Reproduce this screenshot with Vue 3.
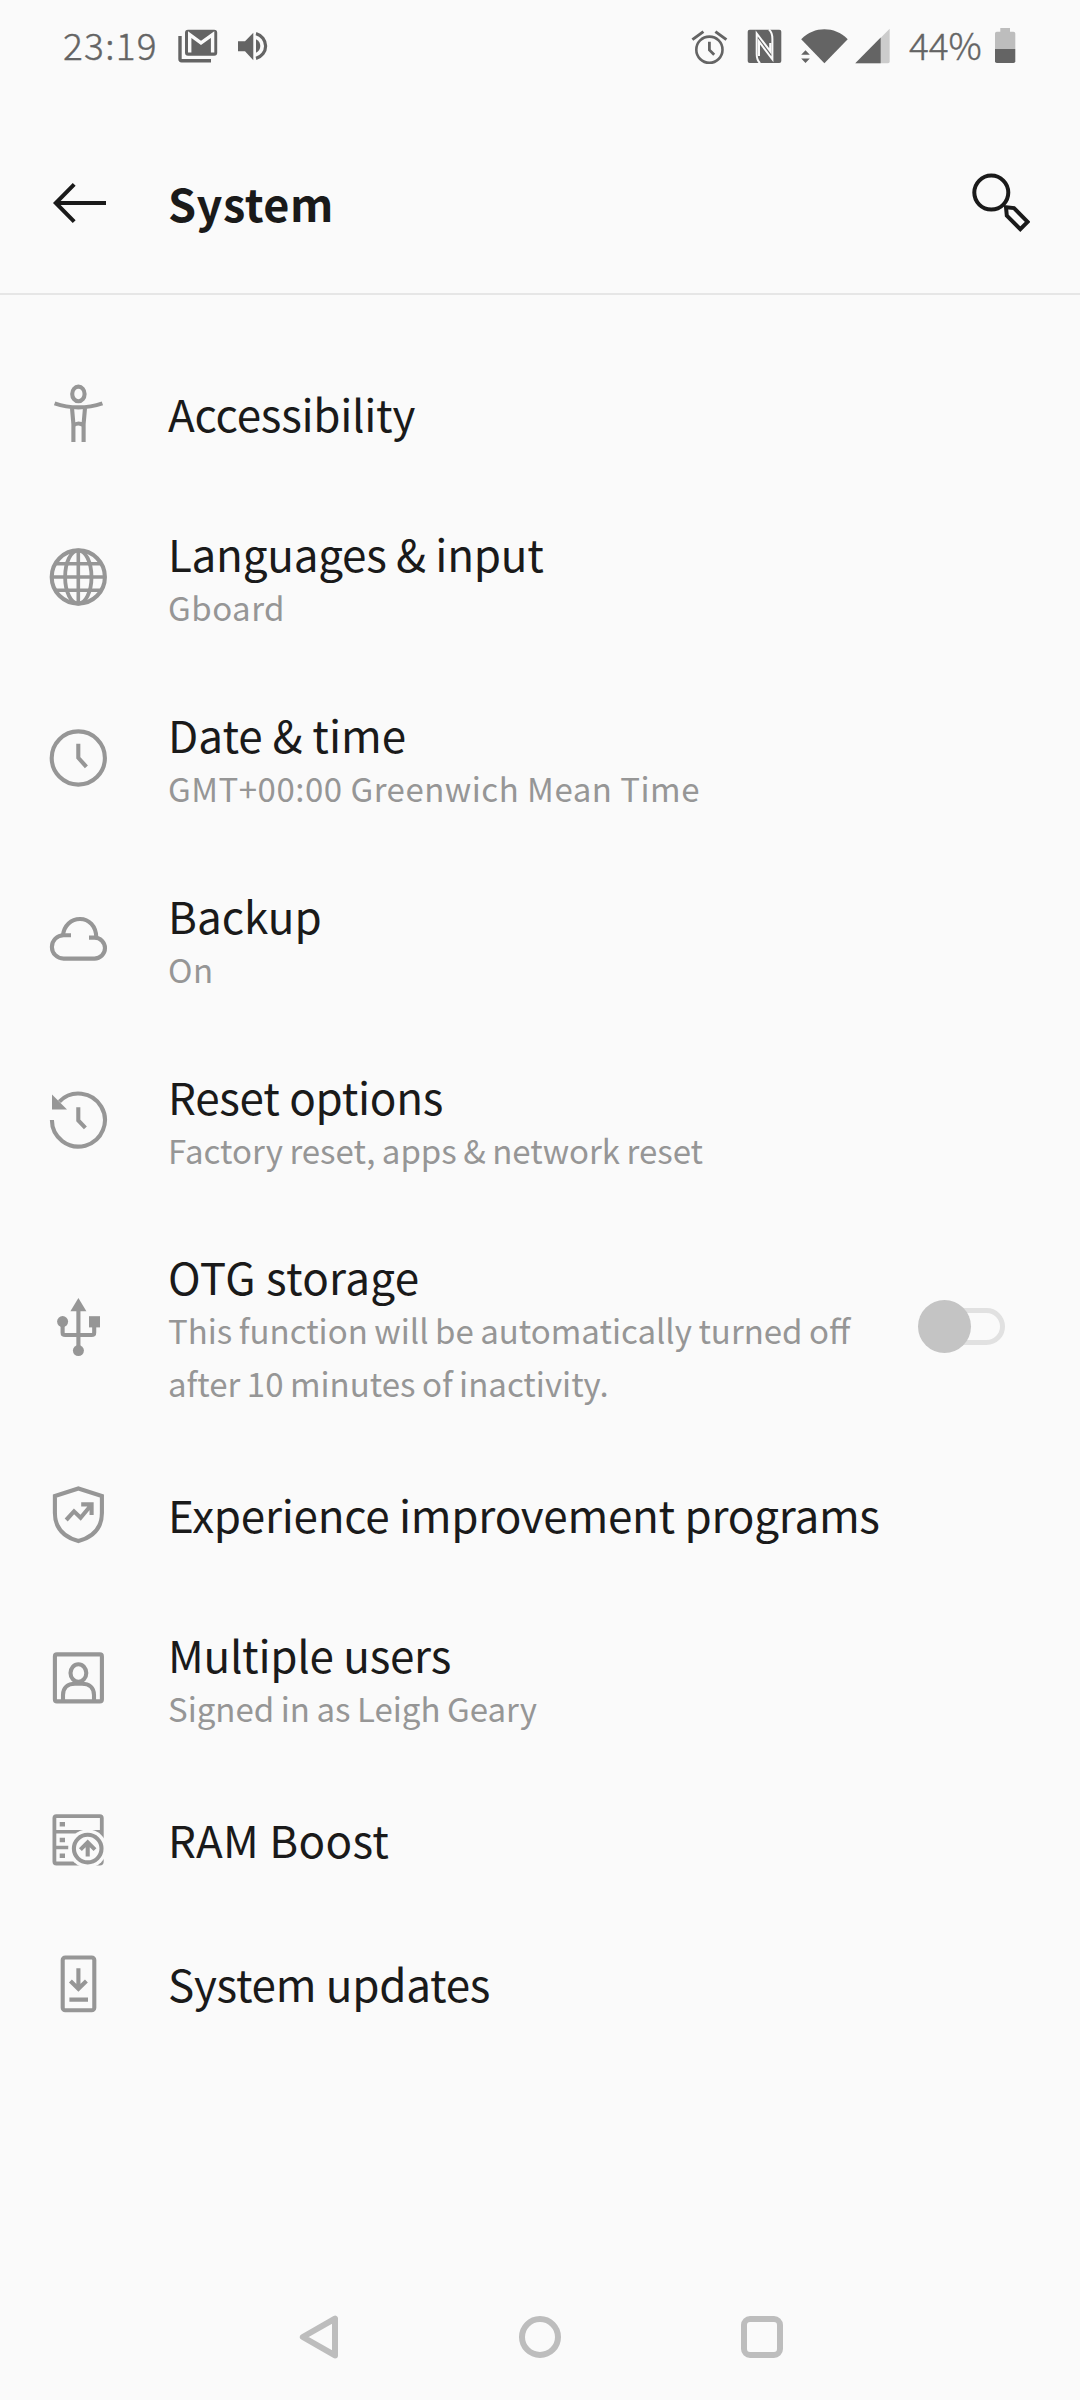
<template>
  <div class="screen">

    <!-- STATUS BAR -->
    <div class="status-bar">
      <span class="clock">23:19</span>

      <svg class="status-gmail" width="40" height="40" viewBox="0 0 40 40">
        <path d="M2 10V33q0 1.7 1.7 1.7H33" fill="none" stroke="#646464" stroke-width="3.4" />
        <rect x="7" y="3.7" width="32.2" height="26" rx="3" fill="#646464" />
        <path d="M11.7 26.6V8.6L23 16.8L34.6 8.6V26.6" fill="none" stroke="#fafafa" stroke-width="3.4" />
      </svg>

      <svg class="status-sound" width="32" height="40" viewBox="0 0 32 40">
        <path d="M0 15.3H7L15.3 6.7V34.3L7 25.3H0Z" fill="#646464" />
        <path d="M18 13.2Q22.3 15.5 22.3 20T18 26.8Z" fill="#646464" />
        <path d="M18 7.6A12.8 12.8 0 0 1 18 32.4" fill="none" stroke="#646464" stroke-width="3.2" />
      </svg>

      <div class="status-right">
        <svg width="40" height="40" viewBox="0 0 40 40" fill="none" stroke="#646464">
          <circle cx="19.4" cy="23.7" r="13.1" stroke-width="2.6" />
          <path d="M2.4 13.6L13.4 5.6M36.4 13.6L25.4 5.6" stroke-width="3" />
          <path d="M19.4 15.8V24L24.2 28.8" stroke-width="2.8" />
        </svg>

        <svg class="status-nfc" width="35" height="40" viewBox="0 0 35 40">
          <rect x="0.7" y="3.7" width="33.6" height="33.4" rx="2" fill="#646464" />
          <path
            d="M13 37.2Q9.7 34 9.7 28V7.5L23.2 25.2V17M22 3.6Q25.4 6.8 25.4 12.8V33.3L12 15.6V30"
            fill="none"
            stroke="#fafafa"
            stroke-width="2"
          />
        </svg>

        <svg class="status-wifi" width="49" height="40" viewBox="0 0 49 40" fill="#646464">
          <path d="M24.4 37.2L1.2 13.3C8 6.5 16 3.3 24.4 3.3S41 6.5 47.7 13.3Z" />
          <path d="M1.2 28.7H9.8L5.5 24.2ZM1.2 32.4H9.8L5.5 36.9Z" />
        </svg>

        <svg class="status-signal" width="35" height="40" viewBox="0 0 35 40">
          <path d="M0.3 37.3L34.7 2.7V35.6q0 1.7-1.7 1.7Z" fill="#cccccc" />
          <path d="M0.3 37.3L25.7 11.5V37.3Z" fill="#646464" />
        </svg>

        <span class="percent">44%</span>

        <svg width="21" height="40" viewBox="0 0 21 40">
          <path d="M5.3 2H15V5.8H18.5q1.8 0 1.8 1.8V23H0V7.6Q0 5.8 1.8 5.8H5.3Z" fill="#bdbdbd" />
          <path d="M0 23H20.3V35.2q0 1.8-1.8 1.8H1.8Q0 37 0 35.2Z" fill="#646464" />
        </svg>
      </div>
    </div>

    <!-- HEADER -->
    <header class="header">
      <svg width="60" height="60" viewBox="0 0 60 60" fill="none" stroke="#1a1a1a" stroke-width="4">
        <path d="M26.2 11.4L7.8 30L26.2 48.6M8 30H58" />
      </svg>

      <h1>System</h1>

      <svg width="60" height="60" viewBox="0 0 60 60" fill="none" stroke="#1a1a1a" stroke-width="4">
        <circle cx="21.3" cy="19.6" r="17" />
        <path d="M36 34.2L44 35.1L57.6 48.8L50.3 56.2L36.8 42.6Z" />
      </svg>
    </header>

    <!-- SETTINGS -->
    <main class="settings-list">
      <div
        v-for="item in items"
        :key="item.title"
        class="row"
        :class="{
          detailed: item.summary
        }"
      >

        <svg
          class="row-icon"
          width="60"
          height="60"
          viewBox="0 0 60 60"
          fill="none"
          stroke="#969696"
          stroke-width="4.1"
          v-html="item.icon"
        ></svg>

        <div class="row-text">
          <h2 :class="item.titleFit">{{ item.title }}</h2>
          <p
            v-if="item.summary"
            :class="item.summaryFit"
          >
            {{ item.summary }}
          </p>
        </div>

        <button
          v-if="item.toggle"
          class="toggle"
          :class="{ on: otgEnabled }"
          :aria-label="item.title"
          @click="otgEnabled = !otgEnabled"
        >
          <span class="knob"></span>
        </button>

      </div>
    </main>

    <!-- NAVIGATION -->
    <nav class="nav-bar">
      <svg width="44" height="44" viewBox="0 0 44 44" class="nav-icon">
        <path d="M38 3.6V40.4L5.8 22Z" stroke-linejoin="round" />
      </svg>
      <svg width="44" height="44" viewBox="0 0 44 44" class="nav-icon">
        <circle cx="22" cy="22" r="18" />
      </svg>
      <svg width="44" height="44" viewBox="0 0 44 44" class="nav-icon">
        <rect x="4" y="4" width="36" height="36" rx="6" />
      </svg>
    </nav>

  </div>
</template>

<script setup>
import { ref } from "vue";

const otgEnabled = ref(false);

const items = [
  {
    title: "Accessibility",
    icon: `
      <ellipse cx="30.4" cy="9.9" rx="6.2" ry="7.3" />
      <path d="M6.6 19.4Q18 23.4 30.4 23.4T54.4 19.4" />
      <path d="M24 24L25.4 40V58M37 24L35.6 40V58M25.4 41.5Q30.4 37.5 35.6 41.5" />
    `,
  },
  {
    title: "Languages & input",
    summary: "Gboard",
    summaryFit: "loose",
    icon: `
      <circle cx="30.3" cy="30" r="26.6" />
      <ellipse cx="30.3" cy="30" rx="13.2" ry="26.6" stroke-width="3.8" />
      <path d="M30.3 3V57M4 30H57M8 16.8H53M8 43.2H53" stroke-width="3.6" />
    `,
  },
  {
    title: "Date & time",
    titleFit: "normal",
    summary: "GMT+00:00 Greenwich Mean Time",
    summaryFit: "loose",
    icon: `
      <circle cx="30.3" cy="30" r="26.6" />
      <path d="M30.3 15.8V29.8L38.4 38.8" />
    `,
  },
  {
    title: "Backup",
    titleFit: "normal",
    summary: "On",
    summaryFit: "loose",
    icon: `
      <path d="M23 26.2H15.6A11.7 11.7 0 0 0 15.6 49.6H46.5A10.5 10.5 0 0 0 46.5 28.6H41" />
      <path d="M14.9 26.2C16.2 16.5 23 10 32 10C41 10 48 17 48.3 28.4" />
    `,
  },
  {
    title: "Reset options",
    summary: "Factory reset, apps & network reset",
    icon: `
      <path d="M3.9 30A26.5 26.5 0 1 0 11.4 11.6" />
      <path d="M4 4.5V19.5H19Z" fill="#969696" stroke="none" />
      <path d="M30.3 17.2V30.4L37.4 37.8" />
    `,
  },
  {
    title: "OTG storage",
    titleFit: "loose",
    summary: "This function will be automatically turned off after 10 minutes of inactivity.",
    toggle: true,
    icon: `
      <path d="M30.4 12V52M14.6 26V35.4q0 2.6 2.6 2.6H43.6q2.6 0 2.6-2.6V28" />
      <path d="M30.4 1L38.4 14.2H22.4Z" fill="#969696" stroke="none" />
      <circle cx="14.6" cy="24.6" r="5.5" fill="#969696" stroke="none" />
      <circle cx="30.4" cy="53.6" r="5.5" fill="#969696" stroke="none" />
      <rect x="41" y="19.2" width="11" height="11.2" fill="#969696" stroke="none" />
    `,
  },
  {
    title: "Experience improvement programs",
    icon: `
      <path d="M30.4 3.5L53.9 11V28C53.9 43.5 45 52 30.4 56C15.8 52 6.9 43.5 6.9 28V11Z" />
      <path d="M18.2 35L26 26.4L32.6 32.8L43.4 19.8M33.2 19.4H43.6V30" />
    `,
  },
  {
    title: "Multiple users",
    summary: "Signed in as Leigh Geary",
    icon: `
      <rect x="6.9" y="6.4" width="47" height="47" rx="2" />
      <ellipse cx="30.4" cy="25" rx="7.9" ry="8.8" />
      <path d="M15 54V47C15 39.4 20 35.7 27 35.7H34C41 35.7 46 39.4 46 47V54" />
    `,
  },
  {
    title: "RAM Boost",
    titleFit: "loose",
    icon: `
      <rect x="6.4" y="6.1" width="47.4" height="47.4" rx="2" stroke-width="3.8" />
      <path d="M6 21.8H54M6 37.5H20.4" stroke-width="3.6" />
      <path d="M11.7 14.3H17M11.7 30H17M11.7 45.7H17" stroke-width="4.4" />
      <circle cx="39.7" cy="38.6" r="19.2" fill="#fafafa" stroke="none" />
      <circle cx="39.7" cy="38.6" r="13.8" />
      <path d="M39.7 46.6V33M32.4 39.6L39.7 32.4L47 39.6" />
    `,
  },
  {
    title: "System updates",
    icon: `
      <rect x="14.7" y="3.5" width="31.6" height="52.8" rx="2.6" />
      <path d="M30.4 14.2V34M22.4 27L30.4 34.8L38.4 27M21.4 45.6H40" />
    `,
  },
];
</script>

<style scoped>
.screen {
  width: 1080px;
  height: 2400px;

  display: flex;
  flex-direction: column;

  background: #fafafa;

  color: #1a1a1a;

  font-family: "Noto Sans CJK SC", "Noto Sans", sans-serif;

  overflow: hidden;
}

svg {
  display: block;
  flex: none;
}

h1,
h2,
p {
  margin: 0;
}

/* STATUS BAR */

.status-bar {
  height: 92px;

  display: flex;
  align-items: center;
  flex: none;

  padding: 0 64px 0 63px;

  color: #646464;
}

.clock,
.percent {
  font-size: 37px;
  font-weight: 300;
  line-height: 54px;

  padding-bottom: 4px;

  white-space: nowrap;

  -webkit-text-stroke: 0.4px #646464;
}

.clock {
  width: 115px;

  letter-spacing: 1.3px;
}

.status-sound {
  margin-left: 20px;
}

.status-right {
  display: flex;
  align-items: center;

  margin-left: auto;
}

.status-nfc {
  margin-left: 17px;
}

.status-wifi {
  margin-left: 18px;
}

.status-signal {
  margin-left: 6px;
}

.percent {
  width: 86px;

  margin-left: 19px;
}

/* HEADER */

.header {
  height: 180px;

  display: flex;
  align-items: center;
  flex: none;

  margin-top: 21px;
  padding: 0 50px 0 48px;

  border-bottom: 2px solid #e6e6e6;
}

.header h1 {
  flex: 1;

  margin-left: 60px;
  padding-bottom: 1px;

  font-size: 45px;
  font-weight: 700;
  line-height: 60px;
  letter-spacing: 0.5px;
}

/* SETTINGS */

.settings-list {
  padding-top: 47px;
}

.row {
  height: 144px;

  display: flex;
  align-items: center;

  padding: 0 75px 0 48px;
}

.row.detailed {
  height: auto;
  min-height: 181px;
}

.row.detailed:has(.toggle) {
  height: 233px;
}

.row-text {
  flex: 1;

  margin-left: 60px;
  padding-bottom: 2px;
}

.detailed .row-text {
  padding-top: 6px;
  padding-bottom: 0;
}

.row-text h2 {
  font-size: 44px;
  font-weight: 400;
  line-height: 55px;
  letter-spacing: -0.27px;

  white-space: nowrap;
}

.row-text h2.normal {
  letter-spacing: normal;
}

.row-text h2.loose {
  letter-spacing: 0.3px;
}

.row-text p {
  max-width: 700px;

  color: #969696;

  font-size: 33px;
  line-height: 53px;
  word-spacing: -0.9px;
}

.row-text p.loose {
  letter-spacing: 0.5px;
  word-spacing: normal;
}

/* TOGGLE */

.toggle {
  position: relative;

  width: 87px;
  height: 53px;

  padding: 0;

  border: none;

  background: none;

  cursor: pointer;
}

.toggle::before {
  content: "";

  position: absolute;
  top: 8px;
  right: 0;

  width: 80px;
  height: 37px;

  box-sizing: border-box;

  border: 5px solid #e1e1e1;
  border-radius: 19px;
}

.knob {
  position: absolute;
  top: 0;
  left: 0;

  width: 53px;
  height: 53px;

  border-radius: 50%;

  background: #c4c4c4;
}

.toggle.on .knob {
  left: 34px;
}

/* NAVIGATION */

.nav-bar {
  height: 126px;

  display: flex;
  align-items: center;
  justify-content: center;
  gap: 177.5px;

  margin-top: auto;
}

.nav-icon {
  fill: none;
  stroke: #bdbdbd;
  stroke-width: 6;
}
</style>

<style>
body {
  margin: 0;

  background: #fafafa;
}
</style>
